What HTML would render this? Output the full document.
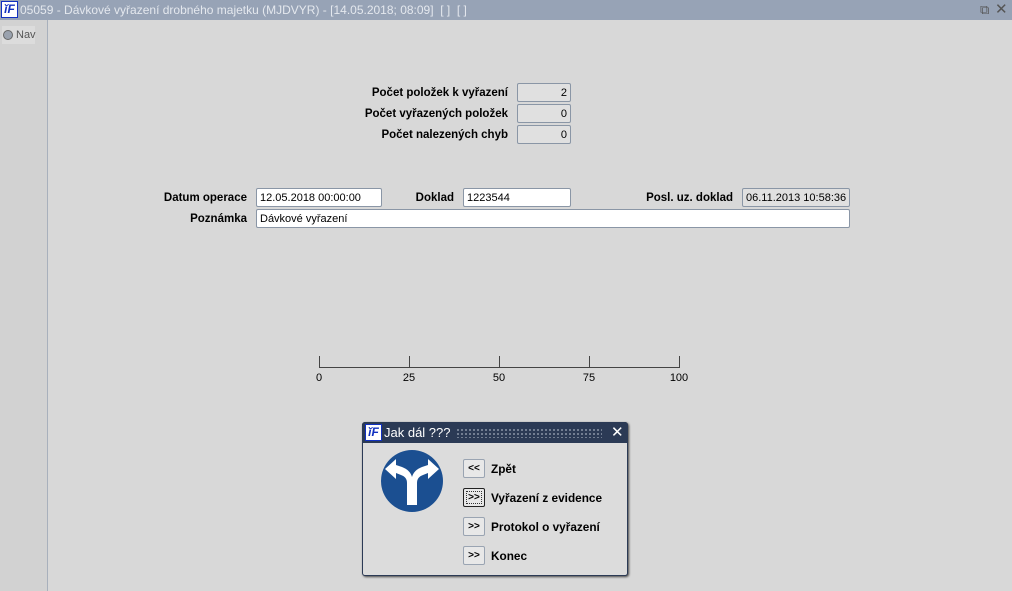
<!DOCTYPE html>
<html><head><meta charset="utf-8"><style>
*{margin:0;padding:0;box-sizing:border-box}
body{width:1012px;height:591px;background:#d8d8d8;font-family:"Liberation Sans",Arial,sans-serif;font-size:11px;position:relative;overflow:hidden}
.a{position:absolute}
.lbl{position:absolute;font-weight:bold;text-align:right;white-space:nowrap;line-height:21px;font-size:11.5px}
.f{position:absolute;height:19px;border:1px solid #8a96a6;border-radius:2px;background:#fff;line-height:19px;padding:0 3px;white-space:nowrap;font-size:11px;overflow:hidden}
.g{background:#e0e0e0;text-align:right}
.btn{position:absolute;left:463px;width:22px;height:19px;border:1px solid #9aa4b2;background:#e8e8e8;font-size:10px;font-weight:bold;text-align:center;line-height:18px;border-radius:2px}
.bl{position:absolute;left:491px;font-weight:bold;line-height:21px;font-size:11.8px}
.tick{position:absolute;top:356px;width:1px;height:12px;background:#444}
.tl{position:absolute;top:372px;width:40px;text-align:center;font-size:11px}
</style></head><body>
<div class="a" style="left:0;top:0;width:1012px;height:20px;background:#97a3b6"></div>
<div class="a" style="left:1px;top:1px;width:17px;height:17px;background:#fff;border:1px solid #1030c0;color:#1030c0;font-weight:bold;font-style:italic;font-size:12px;line-height:15px;text-align:center">ĭF</div>
<div class="a" style="left:20px;top:0;line-height:20px;font-size:12px;color:#e4e8ee;white-space:nowrap">05059 - Dávkové vyřazení drobného majetku (MJDVYR) - [14.05.2018; 08:09]&nbsp; [ ]&nbsp; [ ]</div>
<div class="a" style="left:980px;top:2px;font-size:13px;color:#555">⧉</div>
<div class="a" style="left:995px;top:0;font-size:15px;line-height:20px;color:#555">✕</div>
<div class="a" style="left:0;top:20px;width:48px;height:571px;background:#d2d2d2;border-right:1px solid #a8b0bc"></div>
<div class="a" style="left:2px;top:26px;width:33px;height:18px;background:#dcdcdc"></div>
<div class="a" style="left:3px;top:30px;width:10px;height:10px;border-radius:50%;background:#9aa2ae;border:1px solid #666"></div>
<div class="a" style="left:16px;top:29px;color:#555">Nav</div>

<div class="lbl" style="right:504px;top:83px">Počet položek k vyřazení</div>
<div class="f g" style="left:517px;top:83px;width:54px">2</div>
<div class="lbl" style="right:504px;top:104px">Počet vyřazených položek</div>
<div class="f g" style="left:517px;top:104px;width:54px">0</div>
<div class="lbl" style="right:504px;top:125px">Počet nalezených chyb</div>
<div class="f g" style="left:517px;top:125px;width:54px">0</div>

<div class="lbl" style="right:765px;top:188px">Datum operace</div>
<div class="f" style="left:256px;top:188px;width:126px">12.05.2018 00:00:00</div>
<div class="lbl" style="right:558px;top:188px">Doklad</div>
<div class="f" style="left:463px;top:188px;width:108px">1223544</div>
<div class="lbl" style="right:279px;top:188px">Posl. uz. doklad</div>
<div class="f" style="left:742px;top:188px;width:108px;background:#e0e0e0">06.11.2013 10:58:36</div>
<div class="lbl" style="right:765px;top:209px">Poznámka</div>
<div class="f" style="left:256px;top:209px;width:594px">Dávkové vyřazení</div>

<div class="a" style="left:319px;top:367px;width:361px;height:1px;background:#444"></div>
<div class="tick" style="left:319px"></div><div class="tick" style="left:409px"></div><div class="tick" style="left:499px"></div><div class="tick" style="left:589px"></div><div class="tick" style="left:679px"></div>
<div class="tl" style="left:299px">0</div><div class="tl" style="left:389px">25</div><div class="tl" style="left:479px">50</div><div class="tl" style="left:569px">75</div><div class="tl" style="left:659px">100</div>

<div class="a" style="left:362px;top:422px;width:266px;height:154px;background:#dcdcdc;border:1px solid #2b3a55;border-radius:3px;box-shadow:1px 1px 2px #444"></div>
<div class="a" style="left:362px;top:422px;width:266px;height:21px;background:#2b3a55;border-radius:3px 3px 0 0"></div>
<div class="a" style="left:365px;top:424px;width:17px;height:17px;background:#fff;border:1px solid #1030c0;color:#1030c0;font-weight:bold;font-style:italic;font-size:12px;line-height:15px;text-align:center">ĭF</div>
<div class="a" style="left:384px;top:423px;color:#fff;font-size:13px;line-height:20px">Jak dál ???</div>
<div class="a" style="left:456px;top:428px;width:146px;height:10px;background-image:radial-gradient(#8a94a6 0.8px,transparent 1px);background-size:4px 4px"></div>
<div class="a" style="left:611px;top:422px;color:#fff;font-size:15px;line-height:21px">✕</div>
<svg class="a" style="left:380px;top:449px" width="64" height="64" viewBox="0 0 64 64">
<circle cx="32" cy="32" r="31" fill="#1b4f91"/>
<path d="M27 56 V34 Q27 28 21 26 L16 24 L16 30 L5 20 L16 10 L16 16 L22 18 Q30 21 32 28 Q34 21 42 18 L48 16 L48 10 L59 20 L48 30 L48 24 L43 26 Q37 28 37 34 V56 Z" fill="#fff"/>
</svg>
<div class="btn" style="top:459px">&lt;&lt;</div><div class="bl" style="top:459px">Zpět</div>
<div class="btn" style="top:488px;border:1px solid #222;outline:1px dotted #333;outline-offset:-4px">&gt;&gt;</div><div class="bl" style="top:488px">Vyřazení z evidence</div>
<div class="btn" style="top:517px">&gt;&gt;</div><div class="bl" style="top:517px">Protokol o vyřazení</div>
<div class="btn" style="top:546px">&gt;&gt;</div><div class="bl" style="top:546px">Konec</div>
</body></html>
